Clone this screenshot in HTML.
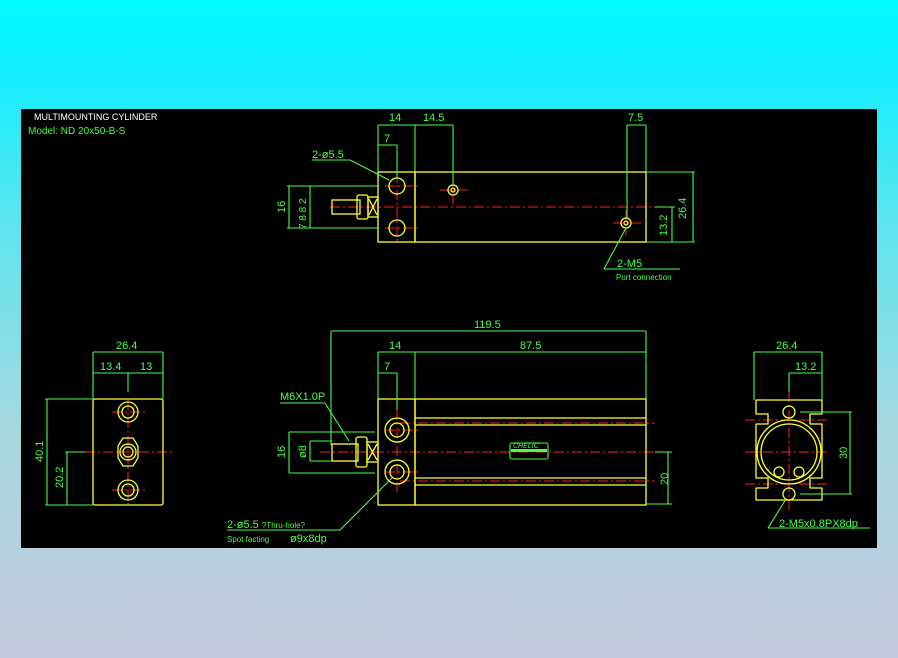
<!DOCTYPE html>
<html><head><meta charset="utf-8"><style>
html,body{margin:0;padding:0;width:898px;height:658px;overflow:hidden;background:linear-gradient(#00fbfd 0%,#1ef 10%,#60e4ee 35%,#a6d8e0 65%,#c4c8dc 100%);}
svg{position:absolute;left:0;top:0}
text{font-family:"Liberation Sans",sans-serif;}
</style></head><body>
<svg width="898" height="658" viewBox="0 0 898 658">
<rect x="21" y="109" width="856" height="439" fill="#000"/>
<g font-size="9" fill="#fff"><text x="34" y="120">MULTIMOUNTING CYLINDER</text></g>
<text x="28" y="134" font-size="10" fill="#44ff44">Model: ND 20x50-B-S</text>

<g stroke="#ff2020" stroke-width="1" stroke-dasharray="10,3,2,3" fill="none" shape-rendering="crispEdges">
<line x1="330" y1="207" x2="655" y2="207"/>
<line x1="397" y1="172" x2="397" y2="242"/>
<line x1="385" y1="186" x2="420" y2="186"/><line x1="385" y1="228" x2="420" y2="228"/>
<line x1="440" y1="190" x2="468" y2="190"/><line x1="453" y1="177" x2="453" y2="204"/>
<line x1="613" y1="223" x2="641" y2="223"/><line x1="626" y1="210" x2="626" y2="236"/>
<line x1="320" y1="452" x2="660" y2="452"/>
<line x1="400" y1="423" x2="655" y2="423"/><line x1="400" y1="481" x2="655" y2="481"/>
<line x1="397" y1="410" x2="397" y2="494"/>
<line x1="385" y1="430" x2="418" y2="430"/><line x1="385" y1="472" x2="418" y2="472"/>
<line x1="85" y1="452" x2="172" y2="452"/><line x1="128" y1="400" x2="128" y2="508"/>
<line x1="112" y1="412" x2="146" y2="412"/><line x1="112" y1="490" x2="146" y2="490"/>
<line x1="745" y1="452" x2="830" y2="452"/><line x1="789" y1="392" x2="789" y2="512"/>
<line x1="745" y1="420" x2="830" y2="420"/><line x1="745" y1="484" x2="830" y2="484"/>
</g>

<g stroke="#ffff30" stroke-width="1.3" fill="none">
<rect x="378" y="172" width="37" height="70"/><rect x="415" y="172" width="231" height="70"/>
<circle cx="397" cy="186" r="8"/><circle cx="397" cy="228" r="8"/>
<circle cx="453" cy="190" r="5"/><circle cx="453" cy="190" r="2"/>
<circle cx="626" cy="223" r="5"/><circle cx="626" cy="223" r="2"/>
<rect x="332" y="200" width="28" height="14"/><rect x="357" y="195" width="11" height="24" rx="2"/>
<rect x="368" y="197" width="10" height="20"/><path d="M369 199L377 215M377 199L369 215"/>
<rect x="378" y="399" width="37" height="106"/><rect x="415" y="399" width="231" height="106"/>
<line x1="415" y1="418" x2="646" y2="418"/><line x1="415" y1="425" x2="646" y2="425"/>
<line x1="415" y1="478" x2="646" y2="478"/><line x1="415" y1="485" x2="646" y2="485"/>
<circle cx="397" cy="430" r="12"/><circle cx="397" cy="430" r="7"/>
<circle cx="397" cy="472" r="12"/><circle cx="397" cy="472" r="7"/>
<rect x="332" y="444" width="26" height="17"/><rect x="356" y="437" width="11" height="30" rx="2"/>
<rect x="367" y="442" width="11" height="20"/><path d="M368 444L377 460M377 444L368 460"/>
<rect x="93" y="399" width="70" height="106" rx="2"/>
<circle cx="128" cy="412" r="10"/><circle cx="128" cy="412" r="6"/>
<polygon points="118,446 123,438 133,438 138,446 138,458 133,466 123,466 118,458"/><circle cx="128" cy="452" r="8"/><circle cx="128" cy="452" r="5"/>
<circle cx="128" cy="490" r="10"/><circle cx="128" cy="490" r="6"/>
<path d="M756 400H822V414H810V424H822V478H810V488H822V500H756V488H768V478H756V424H768V414H756Z" stroke-linejoin="round"/>
<circle cx="789" cy="452" r="32"/><circle cx="789" cy="452" r="28"/>
<circle cx="789" cy="412" r="6"/><circle cx="789" cy="494" r="6"/>
<circle cx="779" cy="472" r="5"/><circle cx="799" cy="472" r="5"/>
</g>

<g stroke="#44ff44" stroke-width="1.1" fill="none">
<line x1="378" y1="125" x2="378" y2="172"/><line x1="415" y1="125" x2="415" y2="172"/><line x1="453" y1="125" x2="453" y2="185"/>
<line x1="378" y1="125" x2="453" y2="125"/><line x1="378" y1="145" x2="397" y2="145"/><line x1="397" y1="145" x2="397" y2="178"/>
<line x1="627" y1="125" x2="646" y2="125"/><line x1="627" y1="125" x2="627" y2="218"/><line x1="646" y1="125" x2="646" y2="172"/>
<line x1="646" y1="172" x2="695" y2="172"/><line x1="646" y1="242" x2="695" y2="242"/><line x1="693" y1="172" x2="693" y2="242"/>
<line x1="655" y1="207" x2="675" y2="207"/><line x1="672" y1="207" x2="672" y2="242"/>
<line x1="287" y1="186" x2="378" y2="186"/><line x1="287" y1="228" x2="378" y2="228"/>
<line x1="289" y1="186" x2="289" y2="228"/><line x1="310" y1="186" x2="310" y2="228"/>
<line x1="312" y1="160" x2="350" y2="160"/><line x1="350" y1="160" x2="389" y2="180"/>
<line x1="626" y1="228" x2="604" y2="269"/><line x1="604" y1="269" x2="680" y2="269"/>
<line x1="331" y1="331" x2="646" y2="331"/><line x1="331" y1="331" x2="331" y2="445"/><line x1="646" y1="331" x2="646" y2="399"/>
<line x1="378" y1="352" x2="646" y2="352"/><line x1="378" y1="352" x2="378" y2="399"/><line x1="415" y1="352" x2="415" y2="399"/>
<line x1="378" y1="373" x2="397" y2="373"/><line x1="397" y1="373" x2="397" y2="410"/>
<line x1="289" y1="432" x2="375" y2="432"/><line x1="289" y1="473" x2="375" y2="473"/><line x1="289" y1="432" x2="289" y2="473"/>
<line x1="310" y1="441" x2="332" y2="441"/><line x1="310" y1="461" x2="332" y2="461"/><line x1="310" y1="441" x2="310" y2="461"/>
<line x1="280" y1="403" x2="325" y2="403"/><line x1="325" y1="403" x2="349" y2="441"/>
<line x1="646" y1="504" x2="672" y2="504"/><line x1="655" y1="452" x2="672" y2="452"/><line x1="668" y1="452" x2="668" y2="504"/>
<line x1="227" y1="530" x2="340" y2="530"/><line x1="340" y1="530" x2="392" y2="478"/>
<rect x="510" y="443" width="38" height="16" rx="2"/>
<line x1="93" y1="352" x2="163" y2="352"/><line x1="93" y1="352" x2="93" y2="399"/><line x1="163" y1="352" x2="163" y2="399"/>
<line x1="93" y1="373" x2="163" y2="373"/><line x1="128" y1="373" x2="128" y2="392"/>
<line x1="45" y1="399" x2="93" y2="399"/><line x1="45" y1="505" x2="93" y2="505"/><line x1="47" y1="399" x2="47" y2="505"/>
<line x1="65" y1="452" x2="85" y2="452"/><line x1="67" y1="452" x2="67" y2="505"/>
<line x1="754" y1="352" x2="822" y2="352"/><line x1="754" y1="352" x2="754" y2="400"/><line x1="822" y1="352" x2="822" y2="400"/>
<line x1="789" y1="373" x2="822" y2="373"/><line x1="789" y1="373" x2="789" y2="392"/>
<line x1="800" y1="412" x2="852" y2="412"/><line x1="800" y1="494" x2="852" y2="494"/><line x1="850" y1="412" x2="850" y2="494"/>
<line x1="786" y1="499" x2="768" y2="528"/><line x1="768" y1="528" x2="870" y2="528"/>
</g>
<rect x="511" y="449" width="36" height="3" fill="#44ff44"/>
<g fill="#44ff44" font-size="11">
<text x="389" y="121">14</text><text x="423" y="121">14.5</text><text x="384" y="142">7</text><text x="628" y="121">7.5</text>
<text x="312" y="158">2-ø5.5</text>
<text x="617" y="267">2-M5</text><text x="616" y="280" font-size="8">Port connection</text>
<text x="474" y="328">119.5</text><text x="389" y="349">14</text><text x="520" y="349">87.5</text><text x="384" y="370">7</text>
<text x="280" y="400">M6X1.0P</text>
<text x="227" y="528">2-ø5.5 <tspan font-size="8">?Thru-hole?</tspan></text>
<text x="227" y="542" font-size="8">Spot facting</text><text x="290" y="542">ø9x8dp</text>
<text x="116" y="349">26.4</text><text x="100" y="370">13.4</text><text x="140" y="370">13</text>
<text x="776" y="349">26.4</text><text x="795" y="370">13.2</text>
<text x="779" y="527">2-M5x0.8PX8dp</text>
<text transform="translate(686,219) rotate(-90)">26.4</text>
<text transform="translate(667,236) rotate(-90)">13.2</text>
<text transform="translate(285,213) rotate(-90)">16</text>
<text transform="translate(306,229) rotate(-90)" font-size="10">7 8 8 2</text>
<text transform="translate(285,458) rotate(-90)">16</text>
<text transform="translate(306,458) rotate(-90)">ø8</text>
<text transform="translate(668,485) rotate(-90)">20</text>
<text transform="translate(43,462) rotate(-90)">40.1</text>
<text transform="translate(63,488) rotate(-90)">20.2</text>
<text transform="translate(847,459) rotate(-90)">30</text>
<text x="513" y="448" font-size="7" font-style="italic">CHELIC</text>
</g>
</svg>
</body></html>
